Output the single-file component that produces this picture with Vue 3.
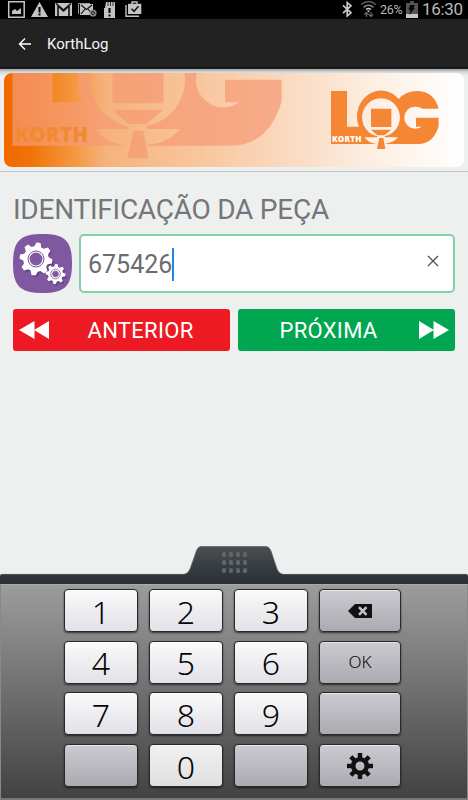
<template>
    <div class="screen">
        <div class="status">
            <svg width="150" height="19" viewBox="0 0 150 19" fill="#c4c4c4">
                <path fill="none" stroke="#c4c4c4" stroke-width="1.5" d="M8.700 1.700h15.500v15.500H8.700z" />
                <path d="M12 14v-3l3-2 2 2 4-3v6z" />
                <path fill-rule="evenodd" d="M39.500 2l8.500 15H31zM38.500 7v5.500h2V7zM38.500 13.500v2h2v-2z" />
                <path d="M55 3h17v13H55z" />
                <path fill="none" stroke="#111" stroke-width="1.600" d="M58 16V6l5.500 5L69 6v10M56 3.500l7.500 6.500L71 3.500" />
                <path d="M80 4h13v11H80z" />
                <path fill="none" stroke="#999" d="M78.500 14V3.500H90" />
                <path fill="none" stroke="#111" stroke-width="1.200" d="M81 5l5.500 4.500L92 5M81 14l4-5M92 14l-4-5" />
                <circle cx="93" cy="13" r="3.600" fill="#888" />
                <circle cx="93" cy="13" r="1.500" fill="none" stroke="#222" />
                <path fill-rule="evenodd" d="M106 2h9v16h-11V8h1zM108.500 8v5h2V8zM108.500 14.500v2h2v-2z" />
                <path stroke="#111" stroke-width=".8" d="M108 2v4M110.500 2v4M113 2v4" />
                <path fill="none" stroke="#c4c4c4" stroke-width="1.400" d="M126 5v11.300h13M132 4V2h5v2" />
                <path d="M128 3.800h13.300V14H128z" />
                <path fill="none" stroke="#111" stroke-width="1.500" d="M131.500 8.800l2.500 2.500 4.500-5" />
            </svg>
            <div class="status-right">
                <svg width="40" height="19" viewBox="340 0 40 19" fill="none">
                    <path stroke="#c8c8c8" stroke-width="1.700" d="M343 5.300l8 7.500-3.800 3.200V2.500L351 5.700l-8 7.500" />
                    <path stroke="#5d5d5d" stroke-width="1.600" d="M361 4.500q7.500-6 15 0" />
                    <path stroke="#858585" stroke-width="1.500" d="M363.500 7.300q5-4 10 0" />
                    <path stroke="#ccc" stroke-width="1.500" d="M366 9.500q2.500-2 5 0" />
                    <path fill="#ccc" d="M367 10.500h3l-1.500 2z" />
                    <path stroke="#666" stroke-width="1.300" d="M366.500 17v-4M364.500 14.500l2-2 2 2M371 12v4.500M369 14.500l2 2 2-2" />
                </svg>
                <span class="percent">26%</span>
                <svg width="12" height="17" viewBox="0 0 12 17">
                    <path fill="#555" d="M4 0h4v2h4v15H0V2h4z" />
                    <path fill="#c8c8c8" d="M0 13h12v4H0z" />
                    <path fill="#080808" d="M4 4h5L7.500 7H9l-6 7 1.500-5H2.500z" />
                </svg>
                <span class="time">16:30</span>
            </div>
        </div>
        <header class="bar">
            <svg width="14" height="14" viewBox="0 0 14 14" fill="none" stroke="#fff" stroke-width="1.400">
                <path d="M13 7H1.500M7 1.500L1.500 7 7 12.500" />
            </svg>
            <span>KorthLog</span>
        </header>

        <div class="banner-wrap">
            <div class="banner">
                <svg width="460" height="94" viewBox="4 73 460 94">
                    <defs>
                        <g id="log">
                            <path d="M123 75H171V182H207Q201 170 201 153A72 78 0 0 1 326 99Q347 75 382 75Q433 77 446 128H397Q390 122 378 122A33 33 0 1 0 395 182H378V155H446V181Q430 234 385 234H286V233Q311 230 324 214H286L283 211A57 57.500 0 1 0 263 211L261 214H223Q236 232 260 234H123Z" />
                            <path d="M243 128H304V183H243ZM243 191H304L283 208H262ZM268 216H280L286 249H261Z" />
                        </g>
                    </defs>
                    <g transform="translate(-90 -49.330) scale(.8333)">
                        <g opacity=".72" fill="#f69a75"><use href="#log" /></g>
                    </g>
                    <text class="korth" x="15" y="142" font-size="20.500" textLength="73" fill="#f28a32">KORTH</text>
                    <g transform="translate(290 66) scale(.3333)" fill="#f58634"><use href="#log" /></g>
                    <text class="korth" x="332" y="142.300" font-size="8.200" textLength="29.500" fill="#fff">KORTH</text>
                </svg>
            </div>
        </div>

        <main>
            <h1>IDENTIFICAÇÃO DA PEÇA</h1>
            <div class="field-row">
                <svg width="59" height="59" viewBox="0 0 59 59">
                    <path fill="#8058a2" d="M29.500 0C52 0 59 7 59 29.500S52 59 29.500 59 0 52 0 29.500 7 0 29.500 0z" />
                    <g fill="#4c2c6b" opacity=".4" transform="translate(1.500 2)">
                        <path :d="gear(23, 25, 16.500, 12.800, 8, 0.15)" />
                        <path :d="gear(42.500, 40, 10, 7.500, 8, 0.1)" />
                    </g>
                    <g fill="#fff">
                        <path :d="gear(23, 25, 16.500, 12.800, 8, 0.15)" />
                        <path :d="gear(42.500, 40, 10, 7.500, 8, 0.1)" />
                    </g>
                    <g fill="none" stroke="#8058a2">
                        <circle cx="23" cy="25" r="8" stroke-width="1" />
                        <circle cx="23" cy="25" r="5.500" stroke-width="2" />
                        <circle cx="42.500" cy="40" r="4.800" stroke-width=".8" />
                        <circle cx="42.500" cy="40" r="2.800" fill="#8058a2" />
                    </g>
                    <circle cx="23" cy="25" r="5" fill="#8058a2" />
                </svg>
                <div class="field">
                    <span>{{ code }}</span><i class="caret"></i>
                    <svg class="clear" width="12" height="12" viewBox="0 0 12 12" stroke="#505458" stroke-width="1.300" @click="code = ''">
                        <path d="M1 1l10 10M11 1L1 11" />
                    </svg>
                </div>
            </div>
            <div class="actions">
                <button class="prev">
                    <svg width="30" height="18" viewBox="0 0 30 18" fill="#fff"><path d="M0 9L15.500 0v8.700L30 0v18l-14.500-8.700V18z" /></svg>
                    <span>ANTERIOR</span>
                </button>
                <button class="next">
                    <span>PRÓXIMA</span>
                    <svg width="30" height="18" viewBox="0 0 30 18" fill="#fff"><path d="M30 9L14.500 0v8.700L0 0v18l14.500-8.700V18z" /></svg>
                </button>
            </div>
        </main>

        <div class="keyboard">
            <svg class="handle" width="468" height="39" viewBox="0 0 468 39">
                <defs>
                    <linearGradient id="tab" x1="0" y1="0" x2="0" y2="1">
                        <stop offset="0" stop-color="#4a4f53" />
                        <stop offset=".6" stop-color="#363b3f" />
                        <stop offset="1" stop-color="#2b2f33" />
                    </linearGradient>
                </defs>
                <path fill="url(#tab)" d="M0 39V31Q0 29 2 29H184Q188 29 190 24L195 10Q197 1.500 201 1.500H266Q270 1.500 272 9L277 24Q279 29 283 29H466Q468 29 468 31V39z" />
                <path fill="none" stroke="#596065" stroke-width=".7" d="M2 29.400H184Q188 29 190 24L195 10Q197 1.500 201 1.500H266Q270 1.500 272 9L277 24Q279 29 283 29.400H466" />
                <g fill="#60666a">
                    <rect v-for="n in 12" :key="n" :x="222 + ((n - 1) % 4) * 7" :y="7 + Math.floor((n - 1) / 4) * 8" width="4" height="5" rx="1.500" />
                </g>
            </svg>
            <div class="keys">
                <button v-for="(key, i) in keys" :key="i" :class="['key', key.type]" @click="press(key.label)">
                    <svg v-if="key.icon === 'delete'" width="24" height="14" viewBox="0 0 24 14">
                        <path fill="#111" d="M0 7L7 0h17v14H7z" />
                        <path stroke="#c2c2c8" stroke-width="2.600" d="M11 3.200l7.500 7.600M18.500 3.200L11 10.800" />
                    </svg>
                    <svg v-else-if="key.icon === 'settings'" width="26" height="26" viewBox="-13 -13 26 26">
                        <g fill="#111">
                            <rect v-for="n in 8" :key="n" x="-2.200" y="-13" width="4.400" height="7" :transform="`rotate(${n * 45})`" />
                        </g>
                        <circle r="6.800" fill="none" stroke="#111" stroke-width="4.600" />
                    </svg>
                    <span v-else>{{ key.label }}</span>
                </button>
            </div>
        </div>
    </div>
</template>

<script setup>
import { ref } from "vue";

const code = ref("675426");

const keys = [
    { label: "1" }, { label: "2" }, { label: "3" }, { icon: "delete", type: "grey" },
    { label: "4" }, { label: "5" }, { label: "6" }, { label: "OK", type: "grey ok" },
    { label: "7" }, { label: "8" }, { label: "9" }, { type: "grey" },
    { type: "grey" }, { label: "0", type: "zero" }, { type: "grey" }, { icon: "settings", type: "grey" },
];

const press = (label) => {
    if (label && label !== "OK") code.value += label;
};

// outline of a cog with slightly tapered teeth
const gear = (cx, cy, outer, inner, teeth, turn) => {
    const points = [];
    const step = (Math.PI * 2) / teeth;
    for (let i = 0; i < teeth; i++) {
        [[-0.36, inner], [-0.16, outer], [0.16, outer], [0.36, inner]].forEach(([offset, r]) => {
            const a = (i + offset) * step + turn;
            points.push(`${(cx + r * Math.cos(a)).toFixed(2)} ${(cy + r * Math.sin(a)).toFixed(2)}`);
        });
    }
    return `M${points.join("L")}Z`;
};
</script>

<style>
body {
    margin: 0;
    background: #eef0f0;
}
</style>

<style scoped>
.screen {
    width: 468px;
    height: 800px;
    display: flex;
    flex-direction: column;
    overflow: hidden;
    background: #eef0f0;
    font-family: Roboto, sans-serif;
}

svg {
    display: block;
    flex: none;
}

button {
    border: 0;
    padding: 0;
    font-family: inherit;
}

.status {
    height: 19px;
    flex: none;
    display: flex;
    justify-content: space-between;
    background: #000;
    color: #b9b9b9;
}

.status-right {
    display: flex;
    align-items: center;
    padding-right: 5px;
}

.percent {
    width: 26px;
    font-size: 12.5px;
    letter-spacing: -0.3px;
}

.time {
    width: 41px;
    margin-left: 4px;
    font-size: 17px;
    line-height: 19px;
    letter-spacing: -0.3px;
}

.bar {
    height: 49px;
    flex: none;
    display: flex;
    align-items: center;
    gap: 15px;
    padding: 2px 0 0 18px;
    box-sizing: border-box;
    background: #222;
    border-bottom: 1px solid #111;
    color: #f5f5f5;
    font-size: 15px;
}

.banner-wrap {
    height: 104px;
    flex: none;
    box-sizing: border-box;
    padding: 5px 4px 0;
    background: linear-gradient(#222 0, #222 1px, #9b9d9e 1px, #d5d8da 4px, #eef0f0 8px);
    border-bottom: 1px solid #c2c5c6;
}

.banner {
    height: 94px;
    border-radius: 8px;
    overflow: hidden;
    background: linear-gradient(90deg, #f06800 0, #f17408 6%, #f4973e 15%, #f6b27c 22%, #f8c8a0 44%, #fbdcc4 64%, #fdf0e5 82%, #fff 100%);
}

.korth {
    font-family: "Open Sans", sans-serif;
    font-weight: 800;
}

main {
    padding: 20px 13px 0;
    flex: 1;
}

h1 {
    margin: 0;
    height: 41.5px;
    font-size: 28px;
    line-height: 36px;
    font-weight: 400;
    letter-spacing: -0.25px;
    color: #747679;
    white-space: nowrap;
}

.field-row {
    display: flex;
    gap: 7px;
}

.field {
    flex: 1;
    height: 59px;
    box-sizing: border-box;
    display: flex;
    align-items: center;
    padding: 2px 14px 0 7px;
    border: 2px solid #84d0a6;
    border-radius: 5px;
    background: #fff;
    color: #6a6d70;
    font-size: 25px;
}

.caret {
    width: 1.5px;
    height: 33px;
    flex: none;
    background: #2086e8;
}

.clear {
    margin: -6px 0 0 auto;
}

.actions {
    display: flex;
    gap: 8px;
    margin-top: 16px;
}

.actions button {
    flex: 1;
    height: 42px;
    display: flex;
    align-items: center;
    border-radius: 3px;
    color: #fff;
    font-size: 22px;
    letter-spacing: 0.3px;
}

.actions span {
    flex: 1;
    padding-top: 1px;
}

.prev {
    padding: 0 0 0 6px;
    background: #ee1a23;
}

.prev span {
    padding-right: 4px;
    margin-right: -6px;
}

.next {
    background: #00a750;
}

.actions .next {
    padding-right: 6px;
}

.keyboard {
    height: 255px;
    flex: none;
}

.keys {
    height: 216px;
    box-sizing: border-box;
    display: grid;
    grid-template-columns: 74px 74px 74px 82px;
    grid-auto-rows: 43px;
    column-gap: 11px;
    row-gap: 8.7px;
    padding: 4px 0 0 63px;
    border: 1px solid #888;
    border-top-color: #aaa;
    border-bottom-width: 2px;
    border-bottom-color: #777;
    background: linear-gradient(#9c9c9c, #424242);
}

.key {
    border: 1px solid #292929;
    border-radius: 4px;
    box-shadow: inset 0 1px 0 #fff8, 0 1px 2px #0009;
    background: linear-gradient(#fafafa, #e1e1e8);
    color: #050505;
    font-family: "Noto Sans", sans-serif;
    font-size: 32px;
    line-height: 40px;
    font-weight: 300;
    display: flex;
    align-items: center;
    justify-content: center;
}

.key span {
    padding-top: 2px;
}

.zero {
    background: linear-gradient(#f1f1f1, #dfdfdf);
}

.grey {
    background: linear-gradient(#cbcbd1, #aaaab0);
}

.ok {
    font-size: 17px;
}

.ok span {
    padding-top: 0;
}
</style>
